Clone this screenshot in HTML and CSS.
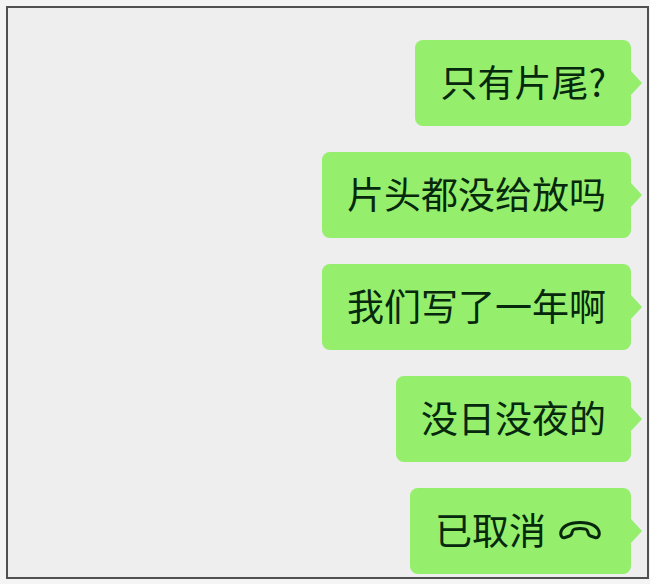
FILE: index.html
```html
<!DOCTYPE html>
<html lang="zh-CN">
<head>
<meta charset="utf-8">
<title>聊天</title>
<link rel="stylesheet" href="styles.css">
</head>
<body>
<main class="chat">
  <p class="bubble">只有片尾?</p>
  <p class="bubble">片头都没给放吗</p>
  <p class="bubble">我们写了一年啊</p>
  <p class="bubble">没日没夜的</p>
  <p class="bubble">
    <span>已取消</span>
    <svg class="call-icon" viewBox="0 0 44 24" aria-hidden="true">
      <path d="M7 20.500C4.500 21.200 2.700 19.500 2.700 16.500C3.200 9.500 11 5.500 22 5.500S40.800 9.500 41.300 16.500C41.300 19.500 39.500 21.200 37 20.500L32.500 19C30.500 18.300 30.200 17.200 29.800 15C29.500 13.200 29 12.500 27.500 12.100C24 11.400 20 11.400 16.500 12.100C15 12.500 14.500 13.200 14.200 15C13.800 17.200 13.500 18.300 11.500 19Z"/>
    </svg>
  </p>
</main>
</body>
</html>
```
FILE: styles.css
```css
* {
  box-sizing: border-box;
}

body {
  margin: 0;
  padding: 6px 1px 5px 6px;
  background: #f4f4f4;
}

.chat {
  display: flex;
  flex-direction: column;
  align-items: flex-end;
  gap: 26px;
  padding: 32px 16px 3px;
  border: 2px solid #505050;
  background: #eeeeee;
}

.bubble {
  position: relative;
  display: flex;
  align-items: center;
  gap: 12px;
  margin: 0;
  padding: 22px 25px 26px;
  border-radius: 8px;
  background: #95ee6c;
  color: #06280c;
  font: 37px/38px "Noto Sans CJK SC", sans-serif;
}

.bubble::after {
  content: "";
  position: absolute;
  top: 31px;
  left: 100%;
  width: 11px;
  height: 24px;
  background: inherit;
  clip-path: polygon(0 0, 100% 50%, 0 100%);
}

.call-icon {
  width: 44px;
  height: 24px;
  margin-right: 4px;
  fill: none;
  stroke: currentColor;
  stroke-width: 3;
  stroke-linejoin: round;
}
```
